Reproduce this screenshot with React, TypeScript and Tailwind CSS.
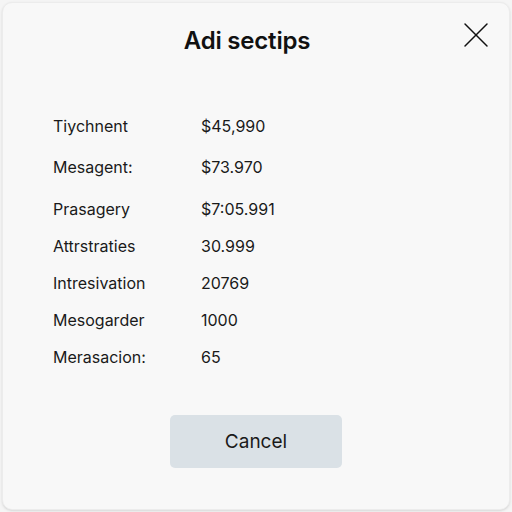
import { X } from "lucide-react";

const rows = [
  { label: "Tiychnent", value: "$45,990", gap: "" },
  { label: "Mesagent:", value: "$73.970", gap: "mt-[4px]" },
  { label: "Prasagery", value: "$7:05.991", gap: "mt-[5px]" },
  { label: "Attrstraties", value: "30.999", gap: "" },
  { label: "Intresivation", value: "20769", gap: "" },
  { label: "Mesogarder", value: "1000", gap: "" },
  { label: "Merasacion:", value: "65", gap: "" },
];

export default function App() {
  return (
    <div
      className="w-[512px] h-[512px] bg-[#f5f5f5] p-[2px]"
      style={{ fontFamily: "Inter, 'Liberation Sans', Arial, sans-serif" }}
    >
      <div className="relative w-full h-full bg-[#f8f8f8] rounded-[10px] border border-[#ececec] shadow-sm flex flex-col">
        {/* Header */}
        <div className="flex justify-center pt-[20px] pr-[18px] h-[104px]">
          <h1 className="text-[24px] font-semibold text-[#111] tracking-[-0.2px]">
            Adi sectips
          </h1>
        </div>
        <button className="absolute right-[11px] top-[10px] text-[#111]">
          <X className="w-[44px] h-[44px]" strokeWidth={0.8} />
        </button>

        {/* Rows */}
        <div className="flex flex-col pl-[50px] text-[16px] text-[#1a1a1a]">
          {rows.map((r) => (
            <div key={r.label} className={`flex items-center h-[37px] ${r.gap}`}>
              <span className="w-[148px]">{r.label}</span>
              <span>{r.value}</span>
            </div>
          ))}
        </div>

        {/* Footer */}
        <div className="flex justify-center mt-[40px]">
          <button className="w-[172px] h-[53px] bg-[#dae1e6] rounded-[5px] text-[19px] text-[#1a1a1a] pt-[2px]">
            Cancel
          </button>
        </div>
      </div>
    </div>
  );
}
